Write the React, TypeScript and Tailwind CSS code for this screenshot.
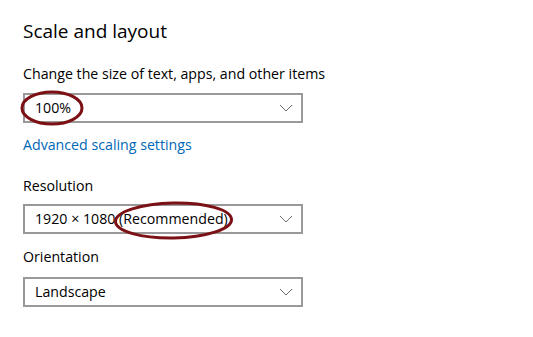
import { ReactNode } from "react";

function Chevron() {
  return (
    <svg width="14" height="8" viewBox="0 0 14 8" className="shrink-0">
      <path d="M1 1 L7 7 L13 1" fill="none" stroke="#6b6b6b" strokeWidth="1" />
    </svg>
  );
}

function Dropdown({ children, className = "" }: { children: ReactNode; className?: string }) {
  return (
    <div
      className={`w-[280px] h-[30px] border-2 border-[#999999] bg-white flex items-center justify-between pl-[10px] pr-[8px] text-[14.2px] text-black ${className}`}
    >
      <span className="leading-[20px] whitespace-nowrap">{children}</span>
      <Chevron />
    </div>
  );
}

export default function App() {
  return (
    <div
      className="relative w-[533px] h-[337px] bg-white overflow-hidden pl-[23px] pt-[17px] text-black"
      style={{ fontFamily: '"Open Sans", "Noto Sans", sans-serif' }}
    >
      <h2 className="text-[19px] leading-[28px] font-normal">Scale and layout</h2>

      <div className="mt-[19px] text-[14.2px] leading-[20px]">
        Change the size of text, apps, and other items
      </div>
      <Dropdown className="mt-[9px]">100%</Dropdown>

      <div className="mt-[12px] text-[14.2px] leading-[20px] text-[#0067b8]">
        Advanced scaling settings
      </div>

      <div className="mt-[21px] text-[14.2px] leading-[20px]">Resolution</div>
      <Dropdown className="mt-[8px]">1920 × 1080 (Recommended)</Dropdown>

      <div className="mt-[13px] text-[14.2px] leading-[20px]">Orientation</div>
      <Dropdown className="mt-[10px]">Landscape</Dropdown>

      {/* hand-drawn highlight rings */}
      <svg className="absolute inset-0 pointer-events-none" width="533" height="337">
        <ellipse cx="52" cy="108" rx="30" ry="16" fill="none" stroke="#7b1114" strokeWidth="3" />
        <ellipse
          cx="173.5"
          cy="220.5"
          rx="58"
          ry="17.5"
          fill="none"
          stroke="#7b1114"
          strokeWidth="3"
          transform="rotate(-1 173.5 220.5)"
        />
      </svg>
    </div>
  );
}
